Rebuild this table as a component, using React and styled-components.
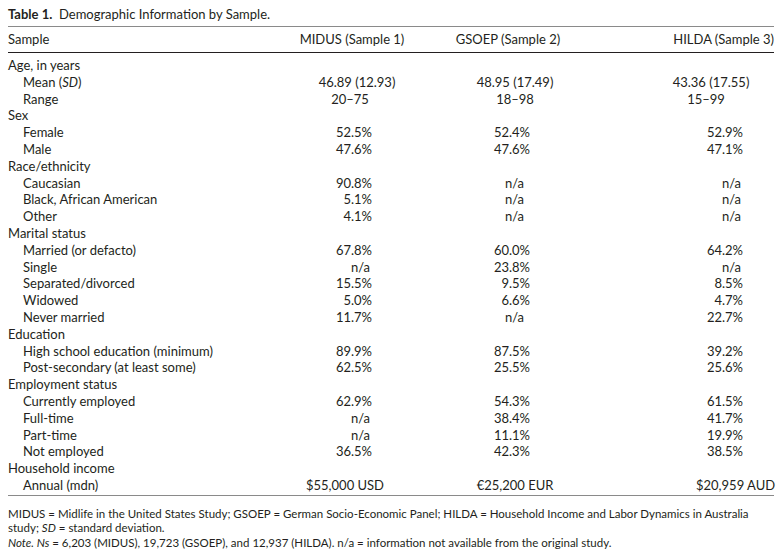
import React from 'react'
import styled, { createGlobalStyle } from 'styled-components'

const GlobalStyle = createGlobalStyle`
  html, body {
    margin: 0;
    padding: 0;
    background: #fff;
  }
  body {
    font-family: Lato, "Open Sans", "Liberation Sans", sans-serif;
    color: #231f20;
  }
`

// rows of the table; sub rows are indented, group rows have no values
// k marks rows whose values are centred rather than right-lined
const rows = [
  { label: 'Age, in years' },
  { label: <>Mean (<i>SD</i>)</>, sub: true, k: 'mean', v: ['46.89 (12.93)', '48.95 (17.49)', '43.36 (17.55)'] },
  { label: 'Range', sub: true, k: 'range', v: ['20–75', '18–98', '15–99'] },
  { label: 'Sex' },
  { label: 'Female', sub: true, v: ['52.5%', '52.4%', '52.9%'] },
  { label: 'Male', sub: true, v: ['47.6%', '47.6%', '47.1%'] },
  { label: 'Race/ethnicity' },
  { label: 'Caucasian', sub: true, v: ['90.8%', 'n/a', 'n/a'] },
  { label: 'Black, African American', sub: true, v: ['5.1%', 'n/a', 'n/a'] },
  { label: 'Other', sub: true, v: ['4.1%', 'n/a', 'n/a'] },
  { label: 'Marital status' },
  { label: 'Married (or defacto)', sub: true, v: ['67.8%', '60.0%', '64.2%'] },
  { label: 'Single', sub: true, v: ['n/a', '23.8%', 'n/a'] },
  { label: 'Separated/divorced', sub: true, v: ['15.5%', '9.5%', '8.5%'] },
  { label: 'Widowed', sub: true, v: ['5.0%', '6.6%', '4.7%'] },
  { label: 'Never married', sub: true, v: ['11.7%', 'n/a', '22.7%'] },
  { label: 'Education' },
  { label: 'High school education (minimum)', sub: true, v: ['89.9%', '87.5%', '39.2%'] },
  { label: 'Post-secondary (at least some)', sub: true, v: ['62.5%', '25.5%', '25.6%'] },
  { label: 'Employment status' },
  { label: 'Currently employed', sub: true, v: ['62.9%', '54.3%', '61.5%'] },
  { label: 'Full-time', sub: true, v: ['n/a', '38.4%', '41.7%'] },
  { label: 'Part-time', sub: true, v: ['n/a', '11.1%', '19.9%'] },
  { label: 'Not employed', sub: true, v: ['36.5%', '42.3%', '38.5%'] },
  { label: 'Household income' },
  { label: 'Annual (mdn)', sub: true, k: 'income', v: ['$55,000 USD', '€25,200 EUR', '$20,959 AUD'] },
]

const kindOf = (row, v) => {
  if (row.k) return row.k
  if (v === 'n/a') return 'na'
  return 'pct'
}

export default function App() {
  return (
    <>
      <GlobalStyle />
      <Page>
        <Caption>
          <strong>Table 1.</strong>&nbsp; Demographic Information by Sample.
        </Caption>

        <Table>
          <HeadRow>
            <Cell>Sample</Cell>
            <HeadCell>MIDUS (Sample 1)</HeadCell>
            <HeadCell>GSOEP (Sample 2)</HeadCell>
            <HeadCell $align="right">HILDA (Sample 3)</HeadCell>
          </HeadRow>

          <Body>
            {rows.map((r, i) => (
              <Row key={i}>
                <Cell $sub={r.sub}>{r.label}</Cell>
                {r.v &&
                  r.v.map((val, c) => (
                    <Value key={c} $col={c} $kind={kindOf(r, val)}>
                      {val}
                    </Value>
                  ))}
              </Row>
            ))}
          </Body>
        </Table>

        <Notes>
          <p>
            MIDUS = Midlife in the United States Study; GSOEP = German Socio-Economic Panel; HILDA = Household Income and Labor Dynamics in Australia
            <br />
            study; <i>SD</i> = standard deviation.
          </p>
          <p>
            <i>Note. Ns</i> = 6,203 (MIDUS), 19,723 (GSOEP), and 12,937 (HILDA). n/a = information not available from the original study.
          </p>
        </Notes>
      </Page>
    </>
  )
}

const Page = styled.div`
  width: 766px;
  padding: 6px 8px 0;
`

const Caption = styled.div`
  font-size: 13px;
  line-height: 16px;
  margin-bottom: 4px;

  strong {
    font-weight: 700;
  }
`

const Table = styled.div`
  border-top: 1px solid #8a8a8a;
  border-bottom: 1px solid #8a8a8a;
  font-size: 13px;
`

const Row = styled.div`
  display: grid;
  grid-template-columns: 1fr 152px 160px 186px;
  align-items: center;
  min-height: 16.8px;
  line-height: 16.8px;
  white-space: nowrap;
`

const HeadRow = styled(Row)`
  height: 25px;
  border-bottom: 1px solid #231f20;
`

const Body = styled.div`
  padding: 4px 0 1px;
`

const Cell = styled.div`
  padding-left: ${({ $sub }) => ($sub ? '15px' : '0')};
`

const HeadCell = styled.div`
  text-align: ${({ $align }) => $align || 'center'};
`

// per column: offset of centred values from the column middle (px),
// right inset of percentages and of n/a
const colSpec = [
  { mean: 5, range: -2, income: -7, right: 56, na: 58 },
  { mean: 7, range: 7, income: 7, right: 58, na: 64 },
  { mean: 30, range: 25, income: 54, right: 31, na: 33 },
]

const Value = styled.div`
  ${({ $col, $kind }) => {
    const s = colSpec[$col]
    if ($kind === 'pct') return `text-align: right; padding-right: ${s.right}px;`
    if ($kind === 'na') return `text-align: right; padding-right: ${s.na}px;`
    const off = s[$kind] * 2
    return off >= 0
      ? `text-align: center; padding-left: ${off}px;`
      : `text-align: center; padding-right: ${-off}px;`
  }}
`

const Notes = styled.div`
  margin-top: 11px;
  font-size: 11.5px;
  line-height: 14.5px;

  p {
    margin: 0;
  }
`
